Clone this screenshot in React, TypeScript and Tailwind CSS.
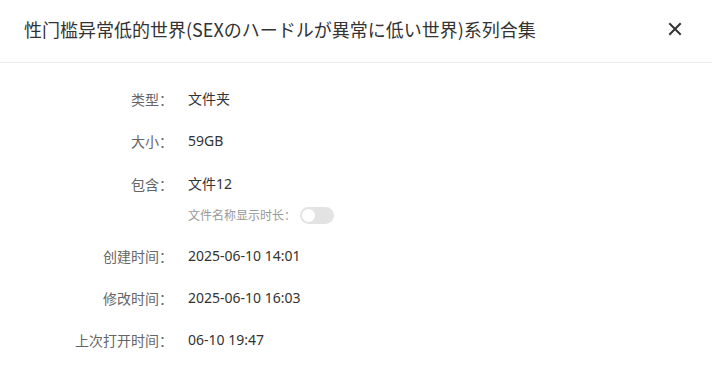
import React, { useState } from 'react';

const font = "font-['Noto_Sans_CJK_SC','Noto_Sans',sans-serif]";

interface RowProps {
  label: string;
  value: string;
  className?: string;
}

function InfoRow({ label, value, className = '' }: RowProps) {
  return (
    <div className={`flex h-[20px] items-center text-[14px] leading-[20px] ${className}`}>
      <div className="w-[173px] shrink-0 text-right text-[#666]">{label}：</div>
      <div className="ml-[15px] font-['Noto_Sans','Noto_Sans_CJK_SC',sans-serif] text-[#333]">{value}</div>
    </div>
  );
}

export default function App() {
  const [showDuration, setShowDuration] = useState(false);

  return (
    <div className={`h-[372px] w-[712px] overflow-hidden bg-white ${font}`}>
      {/* Header */}
      <div className="flex h-[63px] items-center justify-between border-b border-[#ebebeb] pb-[5px] pl-6 pr-[30px]">
        <h1 className="text-[18px] font-normal leading-[24px] text-[#333]">
          性门槛异常低的世界(SEXのハードルが異常に低い世界)系列合集
        </h1>
        <button className="text-[#333]">
          <svg width="14" height="14" viewBox="0 0 14 14" fill="none">
            <path d="M2 2L12 12M12 2L2 12" stroke="currentColor" strokeWidth="2" strokeLinecap="square" />
          </svg>
        </button>
      </div>

      {/* Details */}
      <div className="flex flex-col">
        <InfoRow label="类型" value="文件夹" className="mt-[26px]" />
        <InfoRow label="大小" value="59GB" className="mt-[22px]" />
        <InfoRow label="包含" value="文件12" className="mt-[23px]" />
        <div className="mt-[12px] flex h-[18px] items-center pl-[188px]">
          <span className="text-[12px] leading-[18px] text-[#999]">文件名称显示时长：</span>
          <button
            onClick={() => setShowDuration(!showDuration)}
            className={`ml-[4px] flex h-[17px] w-[34px] items-center rounded-full px-[2px] ${showDuration ? 'justify-end bg-[#3b82f6]' : 'bg-[#e3e3e3]'}`}
          >
            <span className="h-[13px] w-[13px] rounded-full bg-white" />
          </button>
        </div>
        <InfoRow label="创建时间" value="2025-06-10 14:01" className="mt-[22px]" />
        <InfoRow label="修改时间" value="2025-06-10 16:03" className="mt-[22px]" />
        <InfoRow label="上次打开时间" value="06-10 19:47" className="mt-[22px]" />
      </div>
    </div>
  );
}
